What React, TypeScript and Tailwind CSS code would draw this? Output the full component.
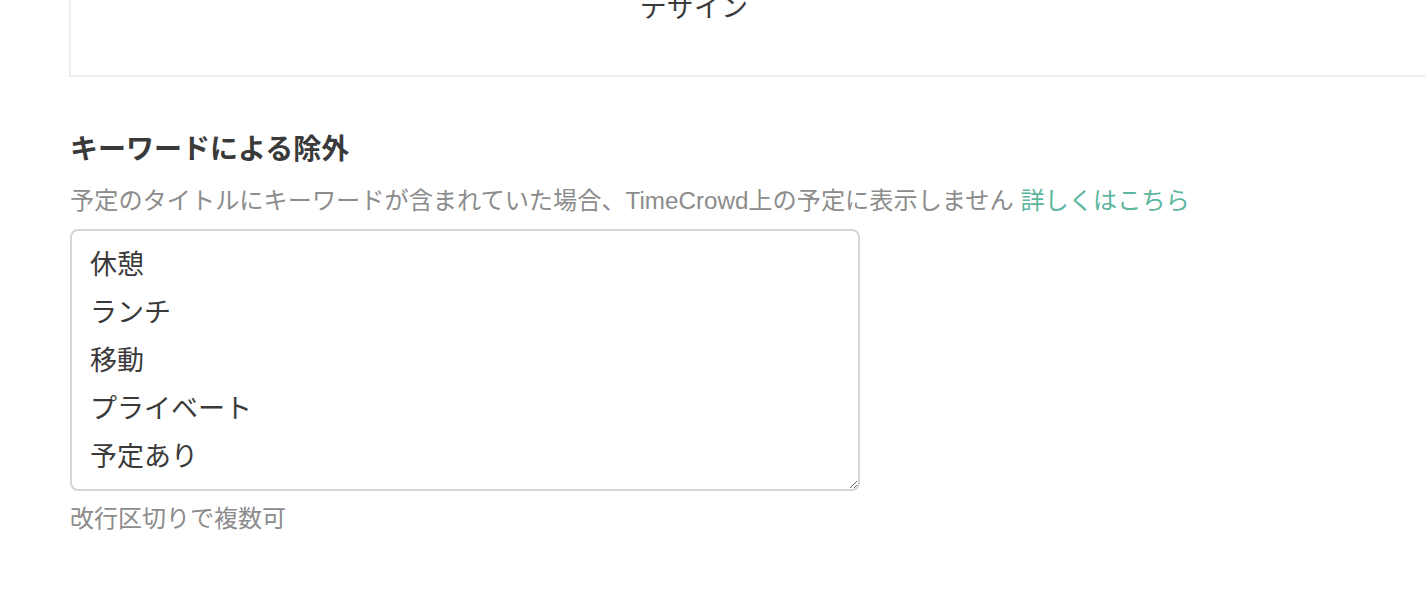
import React from "react";

export default function App() {
  const font = {
    fontFamily: '"Liberation Sans", "Noto Sans CJK JP", sans-serif',
  };
  return (
    <div
      className="w-[1425px] h-[596px] overflow-hidden bg-white relative"
      style={font}
    >
      <div className="ml-[69px] w-[1500px] h-[77px] border-l-2 border-b-2 border-[#ececec] overflow-hidden">
        <div className="mt-[-9px] ml-[569px] text-[27px] leading-[34px] text-[#3a3a3a]">
          デザイン
        </div>
      </div>
      <div className="ml-[70px] mt-[53px]">
        <h2 className="text-[28px] leading-[40px] font-bold text-[#3a3a3a]">
          キーワードによる除外
        </h2>
        <p className="mt-[13px] text-[24.2px] leading-[36px] text-[#8c8c8c] whitespace-nowrap">
          予定のタイトルにキーワードが含まれていた場合、TimeCrowd上の予定に表示しません{" "}
          <a className="text-[#5cb59d]">詳しくはこちら</a>
        </p>
        <textarea
          className="mt-[10px] block w-[790px] h-[262px] border-2 border-[#d6d6d6] rounded-[8px] pl-[18px] pr-[18px] pt-[10px] pb-[10px] text-[27px] leading-[48px] text-[#3a3a3a] outline-none"
          style={font}
          defaultValue={"休憩\nランチ\n移動\nプライベート\n予定あり"}
        />
        <p className="mt-[10px] text-[24px] leading-[36px] text-[#8c8c8c]">
          改行区切りで複数可
        </p>
      </div>
    </div>
  );
}
